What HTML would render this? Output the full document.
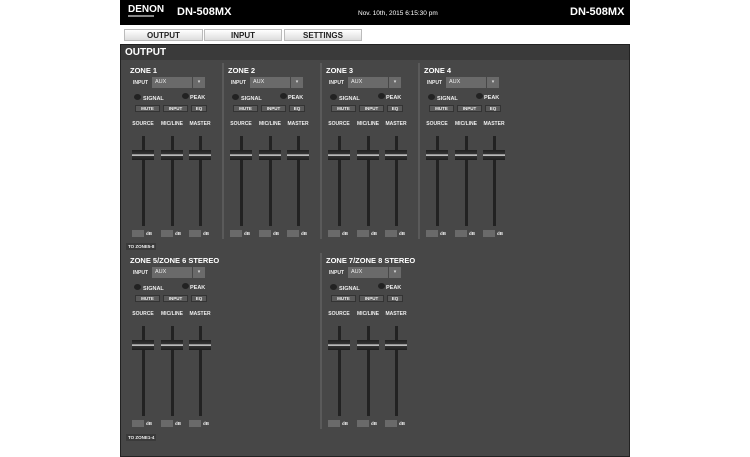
<!DOCTYPE html><html><head><style>
*{margin:0;padding:0;box-sizing:border-box}
body{width:750px;height:457px;background:#fff;position:relative;overflow:hidden;font-family:"Liberation Sans",sans-serif}
.a{position:absolute}
.hdr{left:120px;top:0;width:510px;height:25px;background:#000;color:#fff}
.btn{top:29px;height:12px;background:linear-gradient(#fff,#ddd);border:1px solid #bbb;font-size:8px;font-weight:bold;color:#222;text-align:center;line-height:11px}
.panel{left:120px;top:44px;width:510px;height:413px;background:#474747;border:1px solid #222}
.t{color:#fff;font-weight:bold;font-size:7.5px;white-space:nowrap}
.s{color:#eee;font-size:5px;font-weight:bold;white-space:nowrap}
.dd{background:#6a6a6a;height:11px}
.led{width:7px;height:6px;border-radius:50%;background:#222}
.sb{background:#5a5a5a;border:1px solid #333;height:7px;color:#eee;font-size:4.5px;text-align:center;line-height:6px;font-weight:bold}
.tr{width:3px;background:#222}
.kn{width:22px;height:10px;background:linear-gradient(#222,#333 40%,#555 45%,#fff 48%,#ddd 55%,#333 60%,#1e1e1e)}
.db{width:12px;height:7px;background:#6a6a6a}
.dv{width:2px;background:#5a5a5a}
</style></head><body>
<div class="a hdr">
<div class="a" style="left:8px;top:4px;font-size:10px;font-weight:bold">DENON</div>
<div class="a" style="left:8px;top:15px;width:26px;height:2px;background:#888"></div>
<div class="a" style="left:57px;top:6px;font-size:11px;font-weight:bold">DN-508MX</div>
<div class="a" style="left:238px;top:10px;font-size:6.5px">Nov. 10th, 2015 6:15:30 pm</div>
<div class="a" style="left:450px;top:6px;font-size:11px;font-weight:bold">DN-508MX</div>
</div>
<div class="a btn" style="left:124px;width:79px">OUTPUT</div>
<div class="a btn" style="left:204px;width:78px">INPUT</div>
<div class="a btn" style="left:284px;width:78px">SETTINGS</div>
<div class="a panel"><div class="a" style="left:0;top:0;width:508px;height:15px;background:#3a3a3a"></div>
<div class="a" style="left:4px;top:2px;color:#fff;font-weight:bold;font-size:10px">OUTPUT</div></div>
<div id="z"></div>
<script>
function zone(x,y,title,foot,dv){
var h='';
h+=`<div class="a t" style="left:${x+3}px;top:${y-4}px">${title}</div>`;
h+=`<div class="a s" style="left:${x+6}px;top:${y+10}px">INPUT</div>`;
h+=`<div class="a dd" style="left:${x+25}px;top:${y+7}px;width:40px;color:#eee;font-size:5.5px;padding:2px 0 0 3px">AUX</div>`;
h+=`<div class="a dd" style="left:${x+66}px;top:${y+7}px;width:12px;color:#ddd;font-size:5px;text-align:center;line-height:11px">&#9662;</div>`;
h+=`<div class="a led" style="left:${x+7}px;top:${y+24}px"></div><div class="a s" style="left:${x+16}px;top:${y+26}px;font-size:5.5px">SIGNAL</div>`;
h+=`<div class="a led" style="left:${x+55}px;top:${y+23}px"></div><div class="a s" style="left:${x+63}px;top:${y+25}px;font-size:5.5px">PEAK</div>`;
h+=`<div class="a sb" style="left:${x+8}px;top:${y+35}px;width:25px">MUTE</div>`;
h+=`<div class="a sb" style="left:${x+36}px;top:${y+35}px;width:25px">INPUT</div>`;
h+=`<div class="a sb" style="left:${x+64}px;top:${y+35}px;width:16px">EQ</div>`;
[['SOURCE',16],['MIC/LINE',45],['MASTER',73]].forEach(([l,c])=>{
h+=`<div class="a s" style="left:${x+c-12}px;top:${y+51}px;width:24px;text-align:center">${l}</div>`;
h+=`<div class="a tr" style="left:${x+c-1}px;top:${y+66}px;height:90px"></div>`;
h+=`<div class="a kn" style="left:${x+c-11}px;top:${y+80}px"></div>`;
h+=`<div class="a db" style="left:${x+c-11}px;top:${y+160}px"></div><div class="a s" style="left:${x+c+3}px;top:${y+161}px;font-size:4.5px">dB</div>`;
});
if(dv)h+=`<div class="a dv" style="left:${x+95}px;top:${y-7}px;height:176px"></div>`;
if(foot)h+=`<div class="a s" style="left:${x-1}px;top:${y+173}px;background:#3a3a3a;padding:1px 2px;font-size:4.5px">${foot}</div>`;
return h;}
var h='';
h+=zone(127,70,'ZONE 1','',1)+zone(225,70,'ZONE 2','',1)+zone(323,70,'ZONE 3','',1)+zone(421,70,'ZONE 4','',0);
h+=zone(127,260,'ZONE 5/ZONE 6 STEREO','',0)+zone(323,260,'ZONE 7/ZONE 8 STEREO','',0);
h+=`<div class="a s" style="left:126px;top:243px;background:#3a3a3a;padding:1px 2px;font-size:4.5px">TO ZONE5-8</div>`;
h+=`<div class="a s" style="left:126px;top:434px;background:#3a3a3a;padding:1px 2px;font-size:4.5px">TO ZONE1-4</div>`;
h+=`<div class="a dv" style="left:320px;top:253px;height:176px"></div>`;
document.getElementById('z').innerHTML=h;
</script>
</body></html>
